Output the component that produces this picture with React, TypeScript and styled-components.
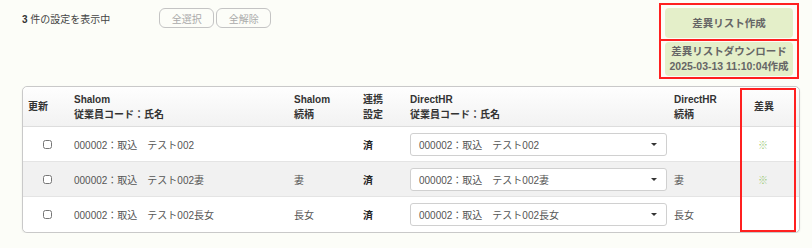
import React from "react";
import styled, { createGlobalStyle } from "styled-components";

const GlobalStyle = createGlobalStyle`
  body {
    margin: 0;
    background: #fcfdf8;
    font-family: "Liberation Sans", "Noto Sans CJK JP", sans-serif;
    color: #555;
  }
`;

const rows = [
  { code: "000002：取込　テスト002", rel: "", link: "済", hr: "000002：取込　テスト002", hrRel: "", diff: true },
  { code: "000002：取込　テスト002妻", rel: "妻", link: "済", hr: "000002：取込　テスト002妻", hrRel: "妻", diff: true },
  { code: "000002：取込　テスト002長女", rel: "長女", link: "済", hr: "000002：取込　テスト002長女", hrRel: "長女", diff: false },
];

const App = () => {
  return (
    <Page>
      <GlobalStyle />
      <TopBar>
        <LeftTools>
          <Count>
            <b>3</b> 件の設定を表示中
          </Count>
          <BtnGroup>
            <GhostBtn>全選択</GhostBtn>
            <GhostBtn>全解除</GhostBtn>
          </BtnGroup>
        </LeftTools>
        <DiffPanel>
          <PanelCell first>
            <GreenBtn>差異リスト作成</GreenBtn>
          </PanelCell>
          <PanelCell>
            <GreenBtn tall>
              <span>差異リストダウンロード</span>
              <span>2025-03-13 11:10:04作成</span>
            </GreenBtn>
          </PanelCell>
        </DiffPanel>
      </TopBar>

      <Table>
        <HeadRow>
          <Th>更新</Th>
          <Th>
            Shalom
            <br />
            従業員コード：氏名
          </Th>
          <Th>
            Shalom
            <br />
            続柄
          </Th>
          <Th>
            連携
            <br />
            設定
          </Th>
          <Th>
            DirectHR
            <br />
            従業員コード：氏名
          </Th>
          <Th>
            DirectHR
            <br />
            続柄
          </Th>
          <Th>差異</Th>
        </HeadRow>
        {rows.map((r, i) => (
          <Row key={i} striped={i % 2 === 1} last={i === rows.length - 1}>
            <Td center>
              <Check type="checkbox" />
            </Td>
            <Td>{r.code}</Td>
            <Td>{r.rel}</Td>
            <Td bold>{r.link}</Td>
            <Td>
              <SelectBox>
                <span>{r.hr}</span>
                <Caret />
              </SelectBox>
            </Td>
            <Td>{r.hrRel}</Td>
            <Td>{r.diff && <DiffMark>※</DiffMark>}</Td>
          </Row>
        ))}
        <DiffFrame />
      </Table>
    </Page>
  );
};

export default App;

const Page = styled.div`
  padding: 0 12px 0 22px;
  width: 778px;
`;

const TopBar = styled.div`
  display: flex;
  justify-content: space-between;
  align-items: flex-start;
  height: 86px;
`;

const LeftTools = styled.div`
  display: flex;
  align-items: center;
  margin-top: 8px;
  gap: 49px;
`;

const Count = styled.div`
  font-size: 10px;
  color: #444;
  b {
    font-weight: bold;
    color: #333;
  }
`;

const BtnGroup = styled.div`
  display: flex;
  gap: 2px;
`;

const GhostBtn = styled.button`
  width: 55px;
  height: 20px;
  padding: 0;
  font-family: "Liberation Sans", "Noto Sans CJK JP", sans-serif;
  font-size: 10px;
  color: #aaa;
  background: #fcfdf8;
  border: 1px solid #c4c4c4;
  border-radius: 6px;
`;

const DiffPanel = styled.div`
  margin-top: 3px;
  margin-right: 1px;
  width: 136px;
  border: 2px solid #ff2020;
  display: flex;
  flex-direction: column;
`;

const PanelCell = styled.div<{ first?: boolean }>`
  padding: ${({ first }) => (first ? "3px 4px 1px" : "1px 4px 1px")};
  border-bottom: ${({ first }) => (first ? "2px solid #ff2020" : "none")};
`;

const GreenBtn = styled.div<{ tall?: boolean }>`
  height: ${({ tall }) => (tall ? "34px" : "30px")};
  background: #e4efc9;
  border-radius: 4px;
  display: flex;
  flex-direction: column;
  align-items: center;
  justify-content: center;
  gap: 2px;
  font-size: 10.5px;
  font-weight: bold;
  color: #666;
  line-height: 13px;
`;

const Table = styled.div`
  position: relative;
  border: 1px solid #c9c9c9;
  border-radius: 5px;
  background: #fff;
  box-shadow: 0 1px 2px rgba(0, 0, 0, 0.08);
`;

const cols = "46px 220px 69px 47px 264px 80px 1fr";

const HeadRow = styled.div`
  box-sizing: border-box;
  display: grid;
  grid-template-columns: ${cols};
  height: 40px;
  background: linear-gradient(to bottom, #fefefe, #f2f2f2);
  border-bottom: 1px solid #ddd;
  border-radius: 5px 5px 0 0;
`;

const Th = styled.div`
  display: flex;
  align-items: center;
  padding-left: 5px;
  font-size: 10px;
  font-weight: bold;
  color: #333;
  line-height: 15px;
`;

const Row = styled.div<{ striped?: boolean; last?: boolean }>`
  box-sizing: border-box;
  display: grid;
  grid-template-columns: ${cols};
  height: 35px;
  background: ${({ striped }) => (striped ? "#f1f1f1" : "#fff")};
  border-bottom: ${({ last }) => (last ? "none" : "1px solid #e4e4e4")};
  border-radius: ${({ last }) => (last ? "0 0 5px 5px" : "0")};
`;

const Td = styled.div<{ center?: boolean; bold?: boolean }>`
  display: flex;
  align-items: center;
  justify-content: ${({ center }) => (center ? "center" : "flex-start")};
  padding-left: ${({ center }) => (center ? "0" : "5px")};
  font-size: 10px;
  font-weight: ${({ bold }) => (bold ? "bold" : "normal")};
  color: ${({ bold }) => (bold ? "#222" : "#555")};
`;

const Check = styled.input`
  width: 9px;
  height: 9px;
  margin: 0 0 0 2px;
`;

const SelectBox = styled.div`
  width: 238px;
  height: 21px;
  padding: 0 9px 0 8px;
  display: flex;
  align-items: center;
  justify-content: space-between;
  background: #fff;
  border: 1px solid #d0d0d0;
  border-radius: 3px;
  font-size: 10px;
  color: #555;
`;

const Caret = styled.span`
  width: 0;
  height: 0;
  border-left: 3px solid transparent;
  border-right: 3px solid transparent;
  border-top: 3px solid #333;
`;

const DiffMark = styled.span`
  margin-left: 4px;
  color: #9ccb7a;
  font-size: 10px;
`;

const DiffFrame = styled.div`
  position: absolute;
  top: 1px;
  bottom: 0px;
  left: 717px;
  width: 52px;
  border: 2px solid #ff2020;
  pointer-events: none;
`;
